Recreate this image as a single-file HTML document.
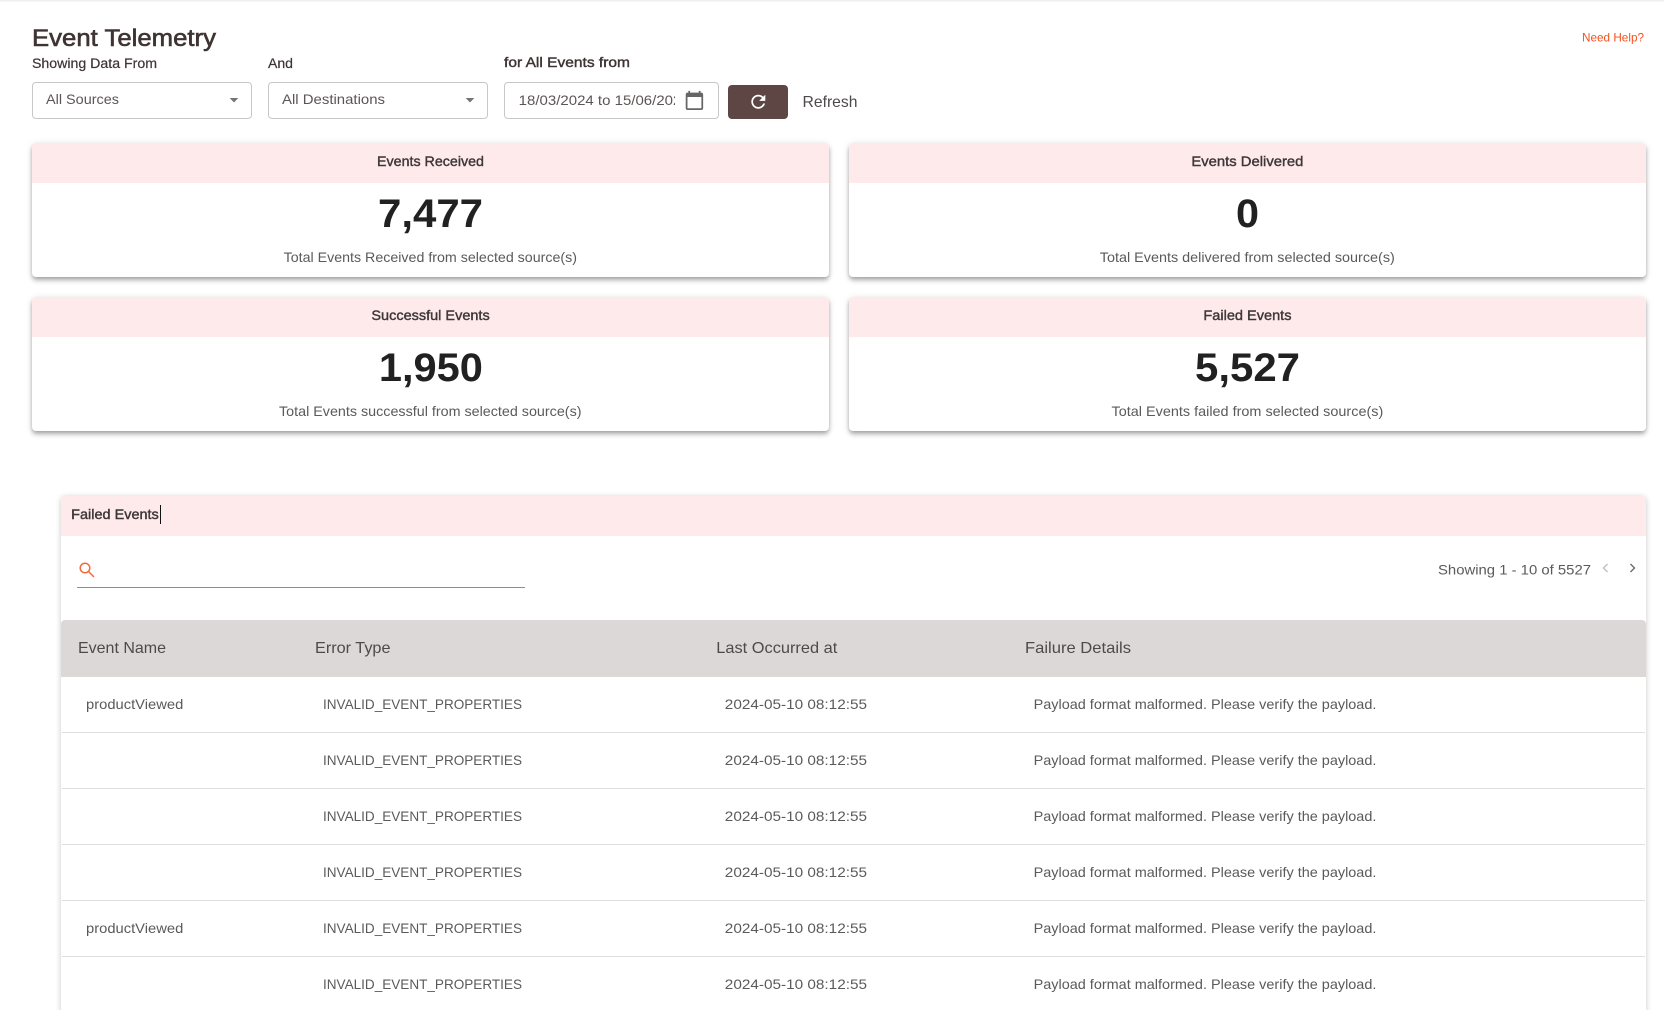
<!DOCTYPE html>
<html lang="en"><head><meta charset="utf-8"><title>Event Telemetry</title>
<style>
html,body{margin:0;padding:0;background:#fff;width:1664px;height:1010px;overflow:hidden}
body{position:relative;font-family:"Liberation Sans",sans-serif}
.a{position:absolute;box-sizing:border-box}
.top{left:0;top:0;width:1664px;height:2px;background:linear-gradient(#ececec,#fafafa)}
.field{background:#fff;border:1px solid #c9c6c6;border-radius:4px;top:82px;height:37px}
.btn{left:728px;top:85px;width:60px;height:34px;background:#5e4645;border-radius:4px}
.card{background:#fff;border-radius:4px;box-shadow:0 2px 4px -1px rgba(0,0,0,.25),0 4px 5px rgba(0,0,0,.16),0 1px 8px rgba(0,0,0,.1);overflow:hidden;height:134px}
.card i{display:block;height:40px;background:#ffeaeb}
.panel{left:61px;top:496px;width:1585px;height:530px;background:#fff;box-shadow:0 1px 6px rgba(0,0,0,.22);border-radius:4px 4px 0 0;overflow:hidden}
.ph{left:0;top:0;width:100%;height:40px;background:#ffeaeb}
.th{left:0;top:124px;width:100%;height:57px;background:#ddd8d8;border-radius:4px 4px 0 0}
.rl{left:1px;width:1583px;height:1px;background:#dedede}
.under{left:77px;top:586.5px;width:448px;height:1px;background:#8d8d8d}
.cur{left:159.5px;top:505px;width:1.4px;height:19px;background:#111}
svg.t{position:absolute;left:0;top:0}
text{font-family:"Liberation Sans",sans-serif}
.m{fill:#3f3434;stroke:#3f3434;stroke-width:.4}
.s{fill:#5c5555}
.r{fill:#5a5a5a;font-size:14px}
.h{fill:#4f4a4a;font-size:16px}
.n{fill:#212121;font-size:40px;font-weight:700}
.c{fill:#3d3737;font-size:14px;stroke:#3d3737;stroke-width:.4}
</style></head><body>
<div class="a top"></div>
<div class="a field" style="left:32px;width:220px"></div>
<div class="a field" style="left:268px;width:220px"></div>
<div class="a field" style="left:504px;width:215px"></div>
<div class="a btn"></div>
<div class="a card" style="left:32px;top:143px;width:797px"><i></i></div>
<div class="a card" style="left:849px;top:143px;width:797px"><i></i></div>
<div class="a card" style="left:32px;top:297px;width:797px"><i></i></div>
<div class="a card" style="left:849px;top:297px;width:797px"><i></i></div>
<div class="a panel"><div class="a ph"></div><div class="a th"></div>
<div class="a rl" style="top:236px"></div><div class="a rl" style="top:292px"></div><div class="a rl" style="top:348px"></div><div class="a rl" style="top:404px"></div><div class="a rl" style="top:460px"></div>
</div>
<div class="a under"></div>
<div class="a cur"></div>
<svg class="t" width="1664" height="1010" viewBox="0 0 1664 1010" xmlns="http://www.w3.org/2000/svg">
<text x="32" y="46" font-size="24" class="m" textLength="184" lengthAdjust="spacingAndGlyphs" style="stroke-width:.6">Event Telemetry</text>
<text x="32" y="68" font-size="13.5" class="m" textLength="125" lengthAdjust="spacingAndGlyphs" style="stroke-width:.2">Showing Data From</text>
<text x="268" y="68" font-size="13.5" class="m" textLength="25" lengthAdjust="spacingAndGlyphs" style="stroke-width:.2">And</text>
<text x="504" y="67" font-size="13.5" class="m" textLength="126" lengthAdjust="spacingAndGlyphs">for All Events from</text>
<text x="1582" y="41.500" font-size="12" fill="#f4511e" textLength="62" lengthAdjust="spacingAndGlyphs">Need Help?</text>

<text x="46" y="104" font-size="14" class="s" textLength="73" lengthAdjust="spacingAndGlyphs">All Sources</text>
<path d="M229.700 98h8.600l-4.300 4.500z" fill="#757575"/>
<text x="282" y="104" font-size="14" class="s" textLength="103" lengthAdjust="spacingAndGlyphs">All Destinations</text>
<path d="M465.700 98h8.600l-4.300 4.500z" fill="#757575"/>
<svg x="518" y="88" width="157" height="26" viewBox="518 88 157 26"><text x="518.700" y="105" font-size="14" class="s" textLength="171" lengthAdjust="spacingAndGlyphs">18/03/2024 to 15/06/2024</text></svg>
<path transform="translate(684 90) scale(.87)" fill="#666" d="M20 3h-1V1h-2v2H7V1H5v2H4c-1.100 0-2 .9-2 2v16c0 1.100.9 2 2 2h16c1.100 0 2-.9 2-2V5c0-1.100-.9-2-2-2zm0 18H4V8h16v13z"/>
<path transform="translate(747.800 91.200) scale(.875)" fill="#fff" d="M17.650 6.350C16.200 4.900 14.210 4 12 4c-4.420 0-7.990 3.580-7.990 8s3.570 8 7.990 8c3.730 0 6.840-2.550 7.730-6h-2.080c-.82 2.330-3.040 4-5.650 4-3.310 0-6-2.690-6-6s2.690-6 6-6c1.660 0 3.140.69 4.220 1.780L13 11h7V4l-2.350 2.350z"/>
<text x="802.500" y="107" class="h" textLength="55" lengthAdjust="spacingAndGlyphs">Refresh</text>

<text x="377" y="166" class="c" textLength="107" lengthAdjust="spacingAndGlyphs">Events Received</text>
<text x="378" y="227" class="n" textLength="105" lengthAdjust="spacingAndGlyphs">7,477</text>
<text x="283.600" y="262" class="r" textLength="293.400" lengthAdjust="spacingAndGlyphs">Total Events Received from selected source(s)</text>
<text x="1191.400" y="166" class="c" textLength="112" lengthAdjust="spacingAndGlyphs">Events Delivered</text>
<text x="1236" y="227" class="n" textLength="23" lengthAdjust="spacingAndGlyphs">0</text>
<text x="1099.800" y="262" class="r" textLength="295" lengthAdjust="spacingAndGlyphs">Total Events delivered from selected source(s)</text>
<text x="371.400" y="320" class="c" textLength="118.300" lengthAdjust="spacingAndGlyphs">Successful Events</text>
<text x="378.900" y="381" class="n" textLength="104" lengthAdjust="spacingAndGlyphs">1,950</text>
<text x="279" y="416" class="r" textLength="302.500" lengthAdjust="spacingAndGlyphs">Total Events successful from selected source(s)</text>
<text x="1203.400" y="320" class="c" textLength="88.100" lengthAdjust="spacingAndGlyphs">Failed Events</text>
<text x="1195" y="381" class="n" textLength="105" lengthAdjust="spacingAndGlyphs">5,527</text>
<text x="1111.500" y="416" class="r" textLength="271.800" lengthAdjust="spacingAndGlyphs">Total Events failed from selected source(s)</text>

<text x="71.200" y="519" class="c" textLength="87.600" lengthAdjust="spacingAndGlyphs">Failed Events</text>
<g fill="none" stroke="#f4693f" stroke-width="1.500"><circle cx="85" cy="568" r="4.800"/><path d="M88.500 571.500l5.500 5.500"/></g>
<text x="1438" y="574.500" class="r" textLength="153" lengthAdjust="spacingAndGlyphs">Showing 1 - 10 of 5527</text>
<path d="M1607.500 564l-4 4 4 4" fill="none" stroke="#bdbdbd" stroke-width="1.300"/>
<path d="M1630.500 564l4 4-4 4" fill="none" stroke="#666" stroke-width="1.300"/>

<text x="78" y="653" class="h" textLength="88" lengthAdjust="spacingAndGlyphs">Event Name</text>
<text x="315" y="653" class="h" textLength="75.500" lengthAdjust="spacingAndGlyphs">Error Type</text>
<text x="716.300" y="653" class="h" textLength="121" lengthAdjust="spacingAndGlyphs">Last Occurred at</text>
<text x="1025" y="653" class="h" textLength="106" lengthAdjust="spacingAndGlyphs">Failure Details</text>

<text x="86" y="709" class="r" textLength="97.300" lengthAdjust="spacingAndGlyphs">productViewed</text>
<text x="323" y="709" class="r" textLength="199" lengthAdjust="spacingAndGlyphs">INVALID_EVENT_PROPERTIES</text>
<text x="724.800" y="709" class="r" textLength="142.200" lengthAdjust="spacingAndGlyphs">2024-05-10 08:12:55</text>
<text x="1033.600" y="709" class="r" textLength="342.800" lengthAdjust="spacingAndGlyphs">Payload format malformed. Please verify the payload.</text>

<text x="323" y="765" class="r" textLength="199" lengthAdjust="spacingAndGlyphs">INVALID_EVENT_PROPERTIES</text>
<text x="724.800" y="765" class="r" textLength="142.200" lengthAdjust="spacingAndGlyphs">2024-05-10 08:12:55</text>
<text x="1033.600" y="765" class="r" textLength="342.800" lengthAdjust="spacingAndGlyphs">Payload format malformed. Please verify the payload.</text>

<text x="323" y="821" class="r" textLength="199" lengthAdjust="spacingAndGlyphs">INVALID_EVENT_PROPERTIES</text>
<text x="724.800" y="821" class="r" textLength="142.200" lengthAdjust="spacingAndGlyphs">2024-05-10 08:12:55</text>
<text x="1033.600" y="821" class="r" textLength="342.800" lengthAdjust="spacingAndGlyphs">Payload format malformed. Please verify the payload.</text>

<text x="323" y="877" class="r" textLength="199" lengthAdjust="spacingAndGlyphs">INVALID_EVENT_PROPERTIES</text>
<text x="724.800" y="877" class="r" textLength="142.200" lengthAdjust="spacingAndGlyphs">2024-05-10 08:12:55</text>
<text x="1033.600" y="877" class="r" textLength="342.800" lengthAdjust="spacingAndGlyphs">Payload format malformed. Please verify the payload.</text>

<text x="86" y="933" class="r" textLength="97.300" lengthAdjust="spacingAndGlyphs">productViewed</text>
<text x="323" y="933" class="r" textLength="199" lengthAdjust="spacingAndGlyphs">INVALID_EVENT_PROPERTIES</text>
<text x="724.800" y="933" class="r" textLength="142.200" lengthAdjust="spacingAndGlyphs">2024-05-10 08:12:55</text>
<text x="1033.600" y="933" class="r" textLength="342.800" lengthAdjust="spacingAndGlyphs">Payload format malformed. Please verify the payload.</text>

<text x="323" y="989" class="r" textLength="199" lengthAdjust="spacingAndGlyphs">INVALID_EVENT_PROPERTIES</text>
<text x="724.800" y="989" class="r" textLength="142.200" lengthAdjust="spacingAndGlyphs">2024-05-10 08:12:55</text>
<text x="1033.600" y="989" class="r" textLength="342.800" lengthAdjust="spacingAndGlyphs">Payload format malformed. Please verify the payload.</text>
</svg>
</body></html>
